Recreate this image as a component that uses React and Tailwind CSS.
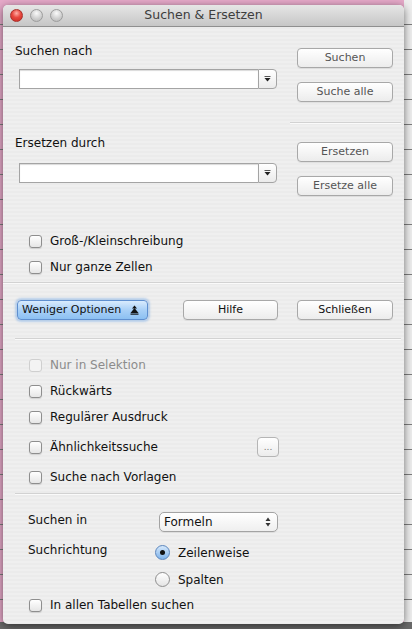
import React from 'react';

const font = "font-['DejaVu_Sans',sans-serif]";

const Checkbox = ({ label, disabled }) => (
    <div className="flex items-center h-4 ml-[26px]">
        <span
            className={
                disabled
                    ? 'w-[13px] h-[13px] rounded-[3px] border border-[#cfcfcf] bg-[#f3f3f3]'
                    : 'w-[13px] h-[13px] rounded-[3px] border border-[#8e8e8e] bg-gradient-to-b from-white to-[#e6e6e6] shadow-[0_1px_1px_rgba(0,0,0,0.12)]'
            }
        />
        <span className={`ml-[8px] text-[12px] leading-4 ${disabled ? 'text-[#8c8c8c]' : 'text-[#111]'}`}>
            {label}
        </span>
    </div>
);

const Button = ({ children, dim, className = '' }) => (
    <div
        className={`h-[20px] flex items-center justify-center rounded-[4px] border border-[#a8a8a8] bg-gradient-to-b from-white to-[#ececec] shadow-[0_1px_0_rgba(0,0,0,0.06)] text-[11px] ${
            dim ? 'text-[#555]' : 'text-[#111]'
        } ${className}`}
    >
        {children}
    </div>
);

const Combo = () => (
    <div className="flex h-[20px] w-[258px]">
        <div className="flex-1 bg-white border border-[#a4a4a4] border-r-0 shadow-[inset_0_1px_1px_rgba(0,0,0,0.15)]" />
        <div className="w-[19px] flex items-center justify-center rounded-r-[4px] border border-[#a4a4a4] bg-gradient-to-b from-white to-[#ebebeb]">
            <svg width="7" height="6" viewBox="0 0 7 6">
                <rect x="0.5" y="0" width="6" height="1" fill="#555" />
                <path d="M0.5 2 L6.5 2 L3.5 5.5 Z" fill="#222" />
            </svg>
        </div>
    </div>
);

const Radio = ({ label, checked }) => (
    <div className="flex items-center h-[15px]">
        {checked ? (
            <span className="w-[15px] h-[15px] rounded-full border border-[#5c86bd] bg-gradient-to-b from-[#d5e8fb] to-[#7fb3ea] flex items-center justify-center">
                <span className="w-[5px] h-[5px] rounded-full bg-[#111]" />
            </span>
        ) : (
            <span className="w-[15px] h-[15px] rounded-full border border-[#8e8e8e] bg-gradient-to-b from-white to-[#e4e4e4]" />
        )}
        <span className="ml-[8px] text-[12px] leading-4 text-[#111]">{label}</span>
    </div>
);

const Sep = ({ className = '' }) => <div className={`h-px bg-[#d2d2d2] shadow-[0_1px_0_#fafafa] ${className}`} />;

const App = () => {
    return (
        <div
            className={`w-[412px] h-[629px] overflow-hidden pt-[5px] pl-[3px] ${font} bg-[linear-gradient(to_bottom,transparent_622px,#6a6a6a_622px),repeating-linear-gradient(to_bottom,transparent_0,transparent_24px,#7d7d7d_24px,#7d7d7d_25px),linear-gradient(to_right,#e6a9c9_0,#e6a9c9_404px,#eeeeee_404px)]`}
        >
            <div className="w-[401px] h-[619px] rounded-[5px] overflow-hidden flex flex-col shadow-[0_2px_8px_rgba(0,0,0,0.55)] bg-[repeating-linear-gradient(to_bottom,#efefef_0,#efefef_2px,#ebebeb_2px,#ebebeb_4px)]">
                {/* title bar */}
                <div className="h-[22px] flex items-center bg-gradient-to-b from-[#e6e6e6] to-[#c6c6c6] border-b border-[#8f8f8f]">
                    <div className="flex gap-[7px] ml-[7px]">
                        <span className="w-[13px] h-[13px] rounded-full border border-[#a9302b] bg-[radial-gradient(circle_at_50%_30%,#ffb0a8_0,#e8483f_45%,#c62a22_100%)]" />
                        <span className="w-[13px] h-[13px] rounded-full border border-[#9d9d9d] bg-[radial-gradient(circle_at_50%_30%,#fafafa_0,#d0d0d0_55%,#b5b5b5_100%)]" />
                        <span className="w-[13px] h-[13px] rounded-full border border-[#9d9d9d] bg-[radial-gradient(circle_at_50%_30%,#fafafa_0,#d0d0d0_55%,#b5b5b5_100%)]" />
                    </div>
                    <span className="flex-1 text-center text-[12.5px] text-[#3d3d3d] mr-[60px]">Suchen &amp; Ersetzen</span>
                </div>

                {/* Suchen nach */}
                <div className="flex">
                    <div className="flex-1">
                        <div className="mt-[16px] ml-[12px] h-4 text-[12px] leading-4 text-[#111]">Suchen nach</div>
                        <div className="mt-[10px] ml-[16px]">
                            <Combo />
                        </div>
                    </div>
                    <div className="w-[96px] mr-[11px]">
                        <Button dim className="mt-[21px]">Suchen</Button>
                        <Button dim className="mt-[14px]">Suche alle</Button>
                    </div>
                </div>
                <Sep className="mt-[20px] ml-[287px] mr-[3px]" />

                {/* Ersetzen durch */}
                <div className="flex">
                    <div className="flex-1">
                        <div className="mt-[12px] ml-[12px] h-4 text-[12px] leading-4 text-[#111]">Ersetzen durch</div>
                        <div className="mt-[12px] ml-[16px]">
                            <Combo />
                        </div>
                    </div>
                    <div className="w-[96px] mr-[11px]">
                        <Button dim className="mt-[19px]">Ersetzen</Button>
                        <Button dim className="mt-[14px]">Ersetze alle</Button>
                    </div>
                </div>

                <div className="mt-[37px]">
                    <Checkbox label="Groß-/Kleinschreibung" />
                </div>
                <div className="mt-[10px]">
                    <Checkbox label="Nur ganze Zellen" />
                </div>
                <Sep className="mt-[7px]" />

                {/* buttons */}
                <div className="flex mt-[17px]">
                    <div className="ml-[14px] w-[131px] h-[20px] flex items-center pl-[4px] rounded-[4px] border border-[#5f8fcf] bg-gradient-to-b from-[#d9ebfd] via-[#a9d0f7] to-[#8cc0f2] shadow-[0_0_2px_2px_rgba(120,170,230,0.45)] text-[11px] text-[#111]">
                        <span>Weniger Optionen</span>
                        <svg className="ml-[9px]" width="9" height="10" viewBox="0 0 9 10">
                            <path d="M4.5 0.5 L7 3.5 L2 3.5 Z" fill="#111" />
                            <path d="M4.5 3 L8.5 8 L0.5 8 Z" fill="#111" />
                            <rect x="0.5" y="8.5" width="8" height="1.2" fill="#111" />
                        </svg>
                    </div>
                    <Button className="ml-[35px] w-[95px]">Hilfe</Button>
                    <Button className="ml-[19px] w-[96px]">Schließen</Button>
                </div>
                <Sep className="mt-[18px] ml-[12px] mr-[3px]" />

                <div className="mt-[18px]">
                    <Checkbox label="Nur in Selektion" disabled />
                </div>
                <div className="mt-[10px]">
                    <Checkbox label="Rückwärts" />
                </div>
                <div className="mt-[10px]">
                    <Checkbox label="Regulärer Ausdruck" />
                </div>
                <div className="mt-[12px] flex items-center h-[20px]">
                    <div className="w-[254px]">
                        <Checkbox label="Ähnlichkeitssuche" />
                    </div>
                    <div className="w-[22px] h-[20px] rounded-[4px] border border-[#b5b5b5] bg-gradient-to-b from-white to-[#ececec] flex items-center justify-center text-[9px] text-[#777] leading-none">
                        ...
                    </div>
                </div>
                <div className="mt-[12px]">
                    <Checkbox label="Suche nach Vorlagen" />
                </div>
                <Sep className="mt-[8px] ml-[12px] mr-[3px]" />

                {/* Suchen in */}
                <div className="flex items-start mt-[17px]">
                    <div className="w-[131px] ml-[25px] mt-[1px] h-4 text-[12px] leading-4 text-[#111]">Suchen in</div>
                    <div className="mt-[1px] w-[119px] h-[20px] flex items-center rounded-[5px] border border-[#a3a3a3] bg-gradient-to-b from-white to-[#efefef] shadow-[0_1px_0_rgba(0,0,0,0.06)]">
                        <span className="ml-[4px] flex-1 text-[12px] text-[#111]">Formeln</span>
                        <svg className="mr-[6px]" width="6" height="10" viewBox="0 0 6 10">
                            <path d="M3 0.5 L5.5 4 L0.5 4 Z" fill="#333" />
                            <path d="M3 9.5 L5.5 6 L0.5 6 Z" fill="#333" />
                        </svg>
                    </div>
                </div>

                <div className="flex items-start mt-[8px]">
                    <div className="w-[127px] ml-[25px] mt-[2px] h-4 text-[12px] leading-4 text-[#111]">Suchrichtung</div>
                    <div className="mt-[5px]">
                        <Radio label="Zeilenweise" checked />
                        <div className="mt-[12px]">
                            <Radio label="Spalten" />
                        </div>
                    </div>
                </div>

                <div className="mt-[10px]">
                    <Checkbox label="In allen Tabellen suchen" />
                </div>
            </div>
        </div>
    );
};

export default App;
